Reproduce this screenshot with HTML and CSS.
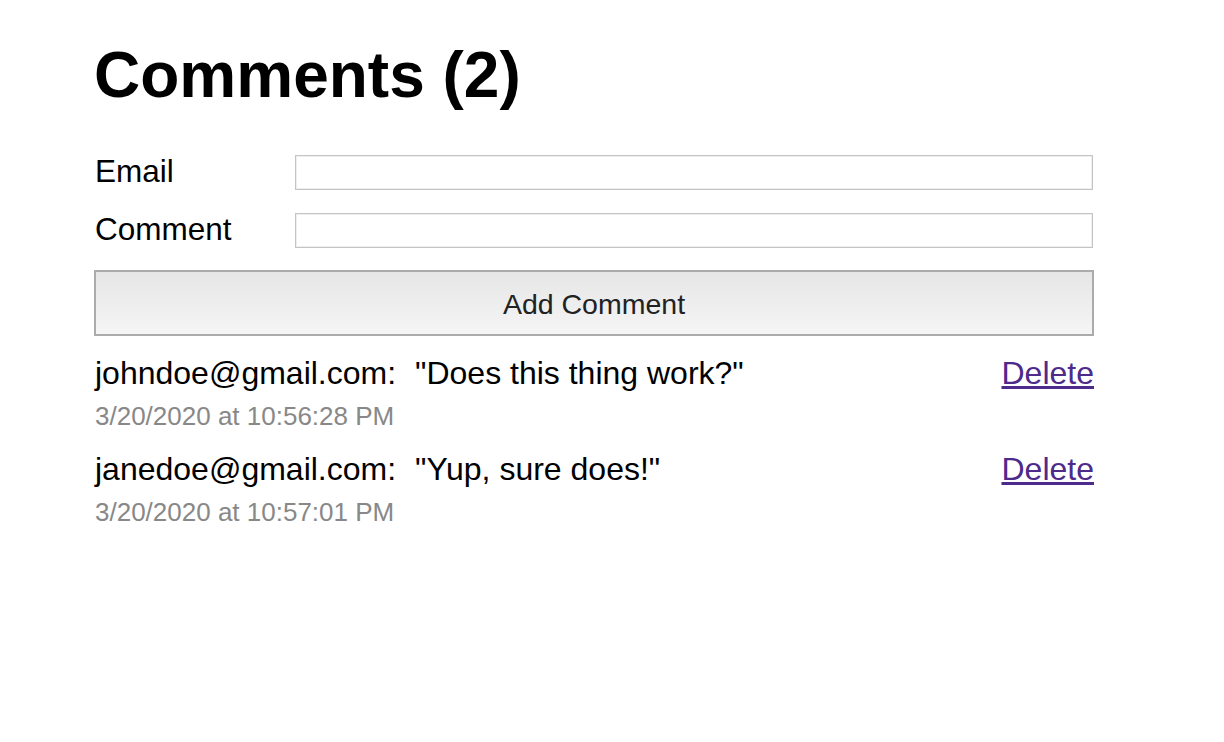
FILE: index.html
```html
<!DOCTYPE html>
<html>
<head>
<meta charset="utf-8">
<link rel="stylesheet" href="styles.css">
</head>
<body>
<div class="page">
  <h1 class="title">Comments (2)</h1>
  <form class="form">
    <label class="label" for="email">Email</label>
    <input class="input" id="email" type="text">
    <label class="label" for="comment">Comment</label>
    <input class="input" id="comment" type="text">
    <button class="button" type="button">Add Comment</button>
  </form>
  <ul class="comments">
    <li class="comment">
      <div class="comment-main">
        <span class="author">johndoe@gmail.com:</span>
        <span class="text">"Does this thing work?"</span>
        <a class="delete" href="#">Delete</a>
      </div>
      <div class="date">3/20/2020 at 10:56:28 PM</div>
    </li>
    <li class="comment">
      <div class="comment-main">
        <span class="author">janedoe@gmail.com:</span>
        <span class="text">"Yup, sure does!"</span>
        <a class="delete" href="#">Delete</a>
      </div>
      <div class="date">3/20/2020 at 10:57:01 PM</div>
    </li>
  </ul>
</div>
</body>
</html>
```

FILE: styles.css
```css
* { box-sizing: border-box; }
html, body { margin: 0; padding: 0; background: #fff; }
body {
  font-family: "Liberation Sans", Arial, Helvetica, sans-serif;
  color: #000;
}
.page {
  width: 1000px;
  margin-left: 94px;
  padding-top: 39px;
}
.title {
  margin: 0;
  font-size: 64px;
  line-height: 72px;
  font-weight: bold;
}
.form {
  margin-top: 44px;
  display: grid;
  grid-template-columns: 201px 1fr;
  row-gap: 23px;
  align-items: center;
}
.label {
  font-size: 31.5px;
  line-height: 35px;
  padding-left: 1px;
  margin-top: -2px;
}
.input {
  height: 35px;
  width: 798px;
  border: 1px solid #c4c4c4;
  box-shadow: inset 0 0 0 1px #eeeeee;
  background: #fff;
  margin: 0;
  outline: none;
}
.button {
  grid-column: 1 / span 2;
  margin-top: -1px;
  height: 66px;
  width: 1000px;
  border: 2px solid #ababab;
  background: linear-gradient(#e6e6e6, #f5f5f5);
  font-family: "Liberation Sans", Arial, Helvetica, sans-serif;
  font-size: 28.5px;
  color: #222;
  padding: 3px 0 0 0;
}
.comments {
  list-style: none;
  margin: 17px 0 0 0;
  padding: 0;
}
.comment { margin-bottom: 17px; }
.comment-main {
  display: flex;
  align-items: baseline;
  font-size: 32px;
  line-height: 40px;
  padding-left: 1px;
}
.author { margin-right: 19px; }
.text { flex: 1; }
.delete { color: #4d2a8b; text-decoration: underline; }
.date {
  margin-top: 7px;
  font-size: 26px;
  line-height: 32px;
  color: #888;
  padding-left: 1px;
}
```
